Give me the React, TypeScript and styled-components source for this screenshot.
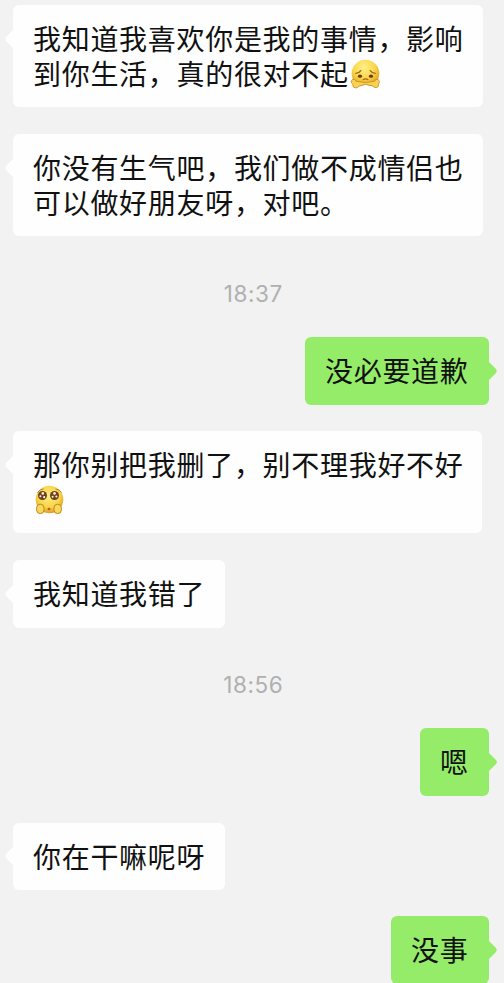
import React from 'react';
import styled, { createGlobalStyle, css } from 'styled-components';

type Side = 'left' | 'right';

const GlobalStyle = createGlobalStyle`
  * { box-sizing: border-box; }
  html, body { margin: 0; padding: 0; background: #f2f2f2; }
  body { overflow: hidden; }
`;

const Chat = styled.main`
  display: flex;
  flex-direction: column;
  width: 504px;
  height: 983px;
  padding: 5px 15.5px 0 13px;
  overflow: hidden;
  background: #f2f2f2;
  font-family: 'Noto Sans CJK SC', sans-serif;
`;

const Row = styled.div<{ $side: Side; $gap: number }>`
  display: flex;
  flex: none;
  justify-content: ${({ $side }) => ($side === 'left' ? 'flex-start' : 'flex-end')};
  margin-bottom: ${({ $gap }) => $gap}px;
`;

const Bubble = styled.div<{ $side: Side; $width: number; $lines: number }>`
  position: relative;
  width: ${({ $width }) => $width}px;
  height: ${({ $lines }) => ($lines === 2 ? 102 : 67.5)}px;
  padding: 16px 0 0 20px;
  border-radius: 6px;
  background: ${({ $side }) => ($side === 'left' ? '#fefefe' : '#95ec69')};
  color: #111;
`;

const Tail = styled.svg<{ $side: Side }>`
  position: absolute;
  top: 22.5px;
  width: 10px;
  height: 22px;
  ${({ $side }) =>
    $side === 'left'
      ? css`
          left: -9px;
          fill: #fefefe;
        `
      : css`
          right: -9px;
          fill: #95ec69;
          transform: scaleX(-1);
        `}
`;

const Line = styled.div`
  display: flex;
  align-items: center;
  height: 35px;
  font-size: 28px;
  line-height: 35px;
  letter-spacing: 0.7px;
  white-space: nowrap;
`;

const Time = styled.time<{ $gap: number }>`
  flex: none;
  height: 30px;
  margin-bottom: ${({ $gap }) => $gap}px;
  padding-left: 5px;
  color: #b0b0b0;
  font-family: Inter, sans-serif;
  font-size: 22.5px;
  line-height: 30px;
  letter-spacing: 0.6px;
  text-align: center;
`;

const Face = styled.svg<{ $indent: number }>`
  flex: none;
  width: 31px;
  height: 30px;
  margin-left: ${({ $indent }) => $indent}px;
`;

const SorryFace = () => (
  <Face $indent={1.5} viewBox="0 0 31 30" aria-label="抱拳道歉">
    <defs>
      <radialGradient id="sorry" cx="45%" cy="28%" r="70%">
        <stop offset="0" stopColor="#fff08a" />
        <stop offset=".55" stopColor="#fbd74b" />
        <stop offset="1" stopColor="#dc9d20" />
      </radialGradient>
    </defs>
    <circle cx="15.5" cy="14.5" r="13.8" fill="url(#sorry)" />
    <path d="M5.8 14.4q3.4-.3 5-2.8M20.2 11.6q1.8 2.5 5 2.8" fill="none" stroke="#9b6420" strokeWidth="1.3" strokeLinecap="round" />
    <ellipse cx="10" cy="17.2" rx="2.1" ry="1.6" fill="#653b18" />
    <ellipse cx="21" cy="17.2" rx="2.1" ry="1.6" fill="#653b18" />
    <path d="M12.8 20.8q2.7-1.9 5.4 0" fill="none" stroke="#a9651a" strokeWidth="1.1" />
    <path d="M8.2 30v-2.6l7.3-2.2 7.3 2.2V30z" fill="#fefefe" />
    <path d="M1.2 22.2q1-2.8 3.3-1.6 1.3.7 1.4 1.6l9.6 1.4 9.2-1.4q.2-1.4 1.7-1.8 2.3-.5 2.9 1.9.4 1.7-.9 2.7.7 3.3-2.2 3.7-2.2.2-3.2-1.7l-7.5-1.6L9 27.2q-1 1.8-3.6 1.7-3-.2-2.6-3.6-1.9-1.1-1.6-3.1z" fill="#f8d250" stroke="#c18a26" strokeWidth=".8" />
  </Face>
);

const PleadingFace = () => (
  <Face $indent={1} viewBox="0 0 31 30" aria-label="可怜">
    <defs>
      <radialGradient id="pleading" cx="48%" cy="38%" r="62%">
        <stop offset="0" stopColor="#ffef83" />
        <stop offset=".65" stopColor="#f9d34a" />
        <stop offset="1" stopColor="#d99e28" />
      </radialGradient>
    </defs>
    <circle cx="15.5" cy="14.5" r="13.8" fill="url(#pleading)" />
    <path d="M3.5 7.5Q6 4 9.5 4M21.5 4q4 .3 6 3.5" fill="none" stroke="#b77e29" strokeWidth="1" />
    <circle cx="8.5" cy="10.5" r="4.5" fill="#70401f" />
    <circle cx="20.5" cy="10.5" r="4.5" fill="#70401f" />
    <g fill="#fff4dd">
      <circle cx="8.8" cy="8.4" r="1.3" />
      <circle cx="6.4" cy="11.2" r="1" />
      <circle cx="10.2" cy="12.2" r="1.1" />
      <circle cx="20.5" cy="8.4" r="1.3" />
      <circle cx="18.6" cy="11.8" r="1" />
      <circle cx="22.4" cy="11.5" r="1.1" />
    </g>
    <ellipse cx="15" cy="24" rx="1.5" ry="1.2" fill="#bd5b20" />
    <rect x="2.6" y="19.2" width="7.4" height="9.4" rx="3.7" fill="#f9d856" stroke="#bd8929" />
    <rect x="20" y="19.2" width="7.4" height="9.4" rx="3.7" fill="#f9d856" stroke="#bd8929" />
  </Face>
);

interface MessageProps {
  side: Side;
  width: number;
  gap?: number;
  lines: React.ReactNode[];
}

const Message = ({ side, width, gap = 0, lines }: MessageProps) => (
  <Row $side={side} $gap={gap}>
    <Bubble $side={side} $width={width} $lines={lines.length}>
      <Tail $side={side} viewBox="0 0 10 22" aria-hidden="true">
        <path d="M10 1 2 9.1Q.2 11 2 12.9L10 21z" />
      </Tail>
      {lines.map((line, i) => (
        <Line key={i}>{line}</Line>
      ))}
    </Bubble>
  </Row>
);

export default function App() {
  return (
    <Chat>
      <GlobalStyle />
      <Message side="left" width={470} gap={27} lines={['我知道我喜欢你是我的事情，影响', <>到你生活，真的很对不起<SorryFace /></>]} />
      <Message side="left" width={470} gap={43} lines={['你没有生气吧，我们做不成情侣也', '可以做好朋友呀，对吧。']} />
      <Time $gap={28}>18:37</Time>
      <Message side="right" width={183.5} gap={26.5} lines={['没必要道歉']} />
      <Message side="left" width={468.5} gap={27} lines={['那你别把我删了，别不理我好不好', <PleadingFace />]} />
      <Message side="left" width={212} gap={42.5} lines={['我知道我错了']} />
      <Time $gap={28}>18:56</Time>
      <Message side="right" width={68.5} gap={27} lines={['嗯']} />
      <Message side="left" width={212} gap={26} lines={['你在干嘛呢呀']} />
      <Message side="right" width={97.5} lines={['没事']} />
    </Chat>
  );
}
